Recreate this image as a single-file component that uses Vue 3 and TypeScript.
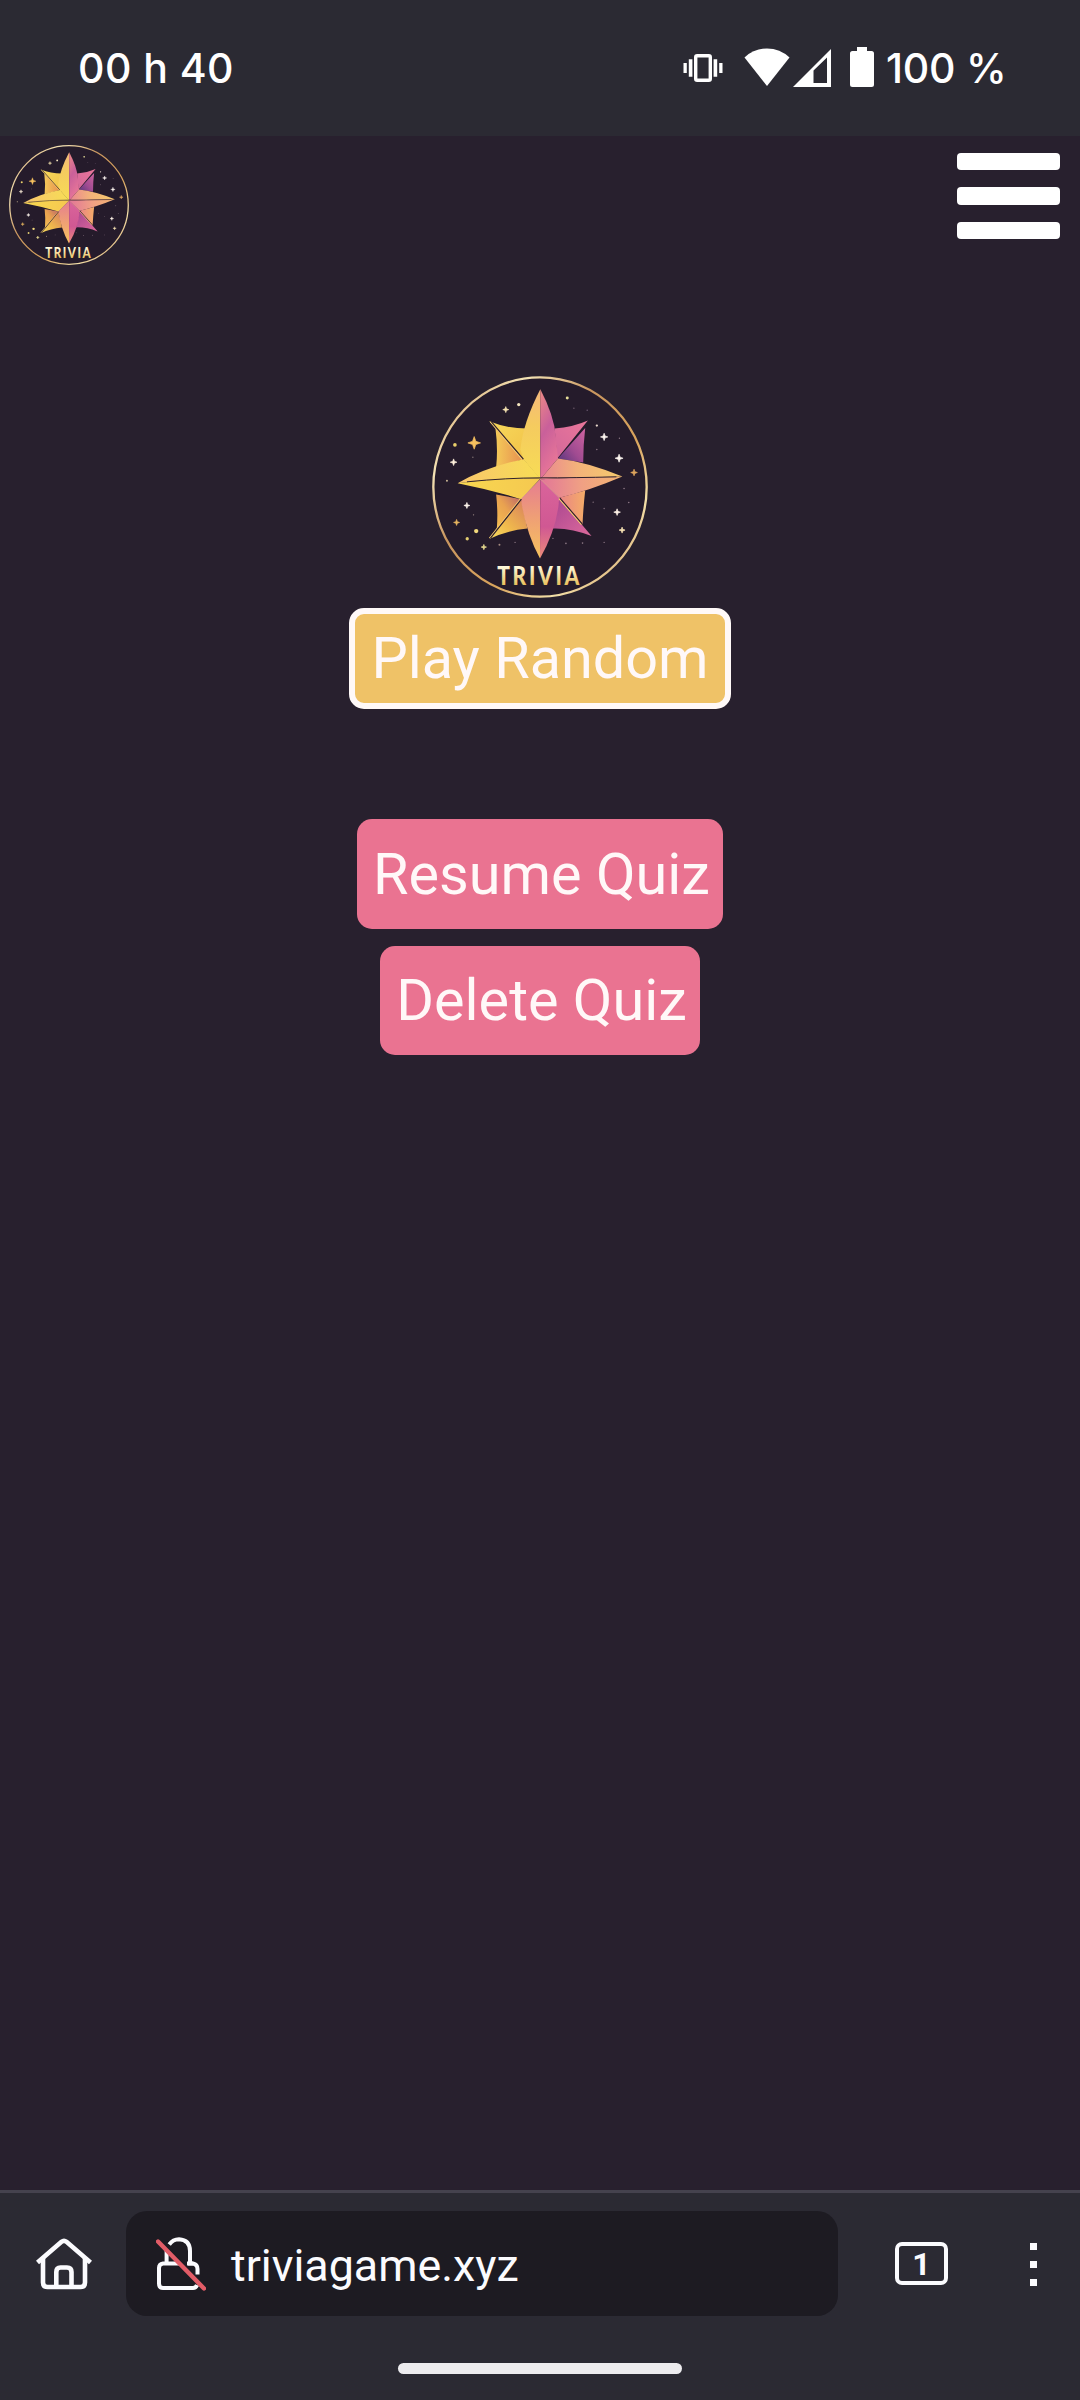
<script setup lang="ts">
interface Spark {
  x: number
  y: number
  r: number
  c: string
}

const actions: { label: string; kind: string }[] = [
  { label: 'Resume Quiz', kind: 'resume' },
  { label: 'Delete Quiz', kind: 'delete' },
]

const sparks: Spark[] = [
  { x: 162, y: 233, r: 19, c: '#f7c15f' },
  { x: 257, y: 133, r: 9, c: '#f5e3b0' },
  { x: 100, y: 291, r: 10, c: '#fff1dc' },
  { x: 140, y: 421, r: 9, c: '#fff6ee' },
  { x: 109, y: 472, r: 9, c: '#e5b45f' },
  { x: 191, y: 546, r: 8, c: '#ecdf92' },
  { x: 553, y: 215, r: 11, c: '#fff8f2' },
  { x: 598, y: 279, r: 12, c: '#fff8f2' },
  { x: 643, y: 322, r: 10, c: '#dfa65e' },
  { x: 592, y: 441, r: 10, c: '#fff3e8' },
  { x: 607, y: 495, r: 9, c: '#f7e2b4' },
]

const dots: Spark[] = [
  { x: 296, y: 118, r: 5, c: '#f5e6c0' },
  { x: 442, y: 98, r: 4.5, c: '#e8e09a' },
  { x: 104, y: 239, r: 5.5, c: '#e9cf6a' },
  { x: 168, y: 498, r: 6.5, c: '#f2d97c' },
  { x: 141, y: 521, r: 5, c: '#e3cd70' },
  { x: 80, y: 347, r: 3, c: '#cbb795' },
  { x: 158, y: 276, r: 2, c: '#8c7c7c' },
  { x: 160, y: 449, r: 2, c: '#a08d88' },
  { x: 531, y: 181, r: 3.5, c: '#e9d8cc' },
  { x: 462, y: 129, r: 2, c: '#756273' },
  { x: 502, y: 135, r: 2, c: '#75627a' },
  { x: 599, y: 219, r: 2, c: '#8c7784' },
  { x: 531, y: 253, r: 2.2, c: '#8c7784' },
  { x: 613, y: 370, r: 2.5, c: '#8c7784' },
  { x: 627, y: 412, r: 2.5, c: '#8c7784' },
  { x: 520, y: 411, r: 2, c: '#8c7784' },
  { x: 553, y: 430, r: 2, c: '#8c7784' },
  { x: 238, y: 539, r: 3, c: '#a58b80' },
  { x: 285, y: 532, r: 2, c: '#8c7784' },
  { x: 438, y: 535, r: 2.5, c: '#8c7784' },
  { x: 488, y: 534, r: 2.5, c: '#8c7784' },
  { x: 553, y: 532, r: 2, c: '#8c7784' },
  { x: 399, y: 520, r: 2, c: '#8c7784' },
]

function sparkPath(s: Spark): string {
  const k = s.r * 0.26
  return `M${s.x} ${s.y - s.r}L${s.x + k} ${s.y - k}L${s.x + s.r} ${s.y}L${s.x + k} ${s.y + k}L${s.x} ${s.y + s.r}L${s.x - k} ${s.y + k}L${s.x - s.r} ${s.y}L${s.x - k} ${s.y - k}Z`
}
</script>

<template>
  <div class="screen">
    <svg class="defs" width="0" height="0" aria-hidden="true">
      <defs>
        <linearGradient id="ring" x1="0" y1="0" x2="1" y2="1">
          <stop offset="0" stop-color="#c98f55" />
          <stop offset=".22" stop-color="#f4e3b5" />
          <stop offset=".4" stop-color="#c9965f" />
          <stop offset=".62" stop-color="#d9a45c" />
          <stop offset=".78" stop-color="#f3dfa8" />
          <stop offset="1" stop-color="#c98f55" />
        </linearGradient>
        <linearGradient id="gold" x1="0" y1="0" x2="0" y2="1">
          <stop offset="0.2" stop-color="#fffbe0" />
          <stop offset=".85" stop-color="#e9bd55" />
        </linearGradient>
        <linearGradient id="topL" x1="0" y1="0" x2="0" y2="1">
          <stop offset="0" stop-color="#f5b87c" />
          <stop offset=".4" stop-color="#f5cb5f" />
          <stop offset="1" stop-color="#f7dc55" />
        </linearGradient>
        <linearGradient id="topR" x1="0" y1="0" x2=".3" y2="1">
          <stop offset="0" stop-color="#ee8a86" />
          <stop offset=".5" stop-color="#c9609a" />
          <stop offset="1" stop-color="#e87698" />
        </linearGradient>
        <linearGradient id="leftT" x1="0" y1="0" x2="1" y2="0">
          <stop offset="0" stop-color="#f8c56c" />
          <stop offset="1" stop-color="#f7dd55" />
        </linearGradient>
        <linearGradient id="leftB" x1="0" y1="0" x2="1" y2="0">
          <stop offset="0" stop-color="#f8d850" />
          <stop offset="1" stop-color="#f5c850" />
        </linearGradient>
        <linearGradient id="rightT" x1="0" y1="0" x2="1" y2="0">
          <stop offset="0" stop-color="#e98592" />
          <stop offset=".45" stop-color="#f3b27a" />
          <stop offset="1" stop-color="#f5cb6c" />
        </linearGradient>
        <linearGradient id="rightB" x1="0" y1="0" x2="1" y2="0">
          <stop offset="0" stop-color="#e27698" />
          <stop offset=".5" stop-color="#f0a084" />
          <stop offset="1" stop-color="#f4b571" />
        </linearGradient>
        <linearGradient id="botL" x1="0" y1="0" x2="0" y2="1">
          <stop offset="0" stop-color="#e67c91" />
          <stop offset=".5" stop-color="#efa075" />
          <stop offset="1" stop-color="#f7c35d" />
        </linearGradient>
        <linearGradient id="botR" x1="0" y1="0" x2="0" y2="1">
          <stop offset="0" stop-color="#da649b" />
          <stop offset=".6" stop-color="#d05893" />
          <stop offset="1" stop-color="#ed8c79" />
        </linearGradient>
        <linearGradient id="sideL" x1="0" y1="0" x2="1" y2="0">
          <stop offset="0" stop-color="#f4ca58" />
          <stop offset="1" stop-color="#e68c50" />
        </linearGradient>
        <linearGradient id="sideLB" x1="0" y1="1" x2="1" y2="0">
          <stop offset="0" stop-color="#f6bf50" />
          <stop offset=".5" stop-color="#e9a250" />
          <stop offset="1" stop-color="#b8606c" />
        </linearGradient>
        <linearGradient id="diagTL" x1="0" y1="0" x2="1" y2="1">
          <stop offset="0" stop-color="#f7d95c" />
          <stop offset="1" stop-color="#f2c248" />
        </linearGradient>
        <linearGradient id="diagTR" x1="1" y1="0" x2="0" y2="1">
          <stop offset="0" stop-color="#ea769a" />
          <stop offset="1" stop-color="#d3689a" />
        </linearGradient>
        <linearGradient id="sideR" x1="1" y1="0" x2="0" y2="1">
          <stop offset="0" stop-color="#d064a0" />
          <stop offset=".55" stop-color="#a04b91" />
          <stop offset="1" stop-color="#56357c" />
        </linearGradient>
        <linearGradient id="sideRB" x1="0" y1="0" x2="1" y2="0">
          <stop offset="0" stop-color="#e98484" />
          <stop offset="1" stop-color="#f5ad68" />
        </linearGradient>
        <linearGradient id="diagBR" x1="0" y1="0" x2="1" y2="1">
          <stop offset="0" stop-color="#a84590" />
          <stop offset="1" stop-color="#dd6a9c" />
        </linearGradient>
        <linearGradient id="diagBL" x1="1" y1="0" x2="0" y2="1">
          <stop offset="0" stop-color="#d67c60" />
          <stop offset=".6" stop-color="#f0b94c" />
          <stop offset="1" stop-color="#f8dc60" />
        </linearGradient>
        <symbol id="emblem" viewBox="35 32 650 667" preserveAspectRatio="none">
          <ellipse cx="360" cy="365.500" rx="321" ry="329.500" fill="#251b2b" stroke="url(#ring)" stroke-width="7" />
          <path v-for="(s, i) in sparks" :key="'s' + i" :d="sparkPath(s)" :fill="s.c" :stroke="s.c" stroke-width="2" />
          <circle v-for="(d, i) in dots" :key="'d' + i" :cx="d.x" :cy="d.y" :r="d.r" :fill="d.c" />
          <path d="M226 190L312 282L228 306Q234 250 226 190Z" fill="url(#sideL)" />
          <path d="M207 168Q262 190 320 190L311 284Z" fill="url(#diagTL)" />
          <path d="M496 188L414 280L490 292Q490 240 496 188Z" fill="url(#sideR)" />
          <path d="M504 166Q460 186 404 190L412 280Z" fill="url(#diagTR)" />
          <path d="M228 388L304 402L230 492Q234 440 228 388Z" fill="url(#sideLB)" />
          <path d="M209 521Q260 496 322 490L304 402Z" fill="url(#diagBL)" />
          <path d="M496 376L418 398L488 478Q490 430 496 376Z" fill="url(#sideRB)" />
          <path d="M515 513Q455 488 398 490L418 398Z" fill="url(#diagBR)" />
          <path d="M361 72Q310 170 301 252L311 284L361 342Z" fill="url(#topL)" />
          <path d="M361 72Q402 150 408 215L414 280L361 342Z" fill="url(#topR)" />
          <path d="M112 354Q200 304 311 282L361 340Q230 340 112 354Z" fill="url(#leftT)" />
          <path d="M112 354Q230 338 361 340L303 402Q205 372 112 354Z" fill="url(#leftB)" />
          <path d="M608 334Q500 290 414 280L361 342Q480 336 608 334Z" fill="url(#rightT)" />
          <path d="M608 334Q480 336 361 342L418 398Q510 376 608 334Z" fill="url(#rightB)" />
          <path d="M361 342L303 402Q316 500 360 580Z" fill="url(#botL)" />
          <path d="M361 342L418 398Q412 490 360 580Z" fill="url(#botR)" />
          <path d="M361 342L303 402M361 342L418 398" stroke="#f6ae9f" stroke-width="2" fill="none" />
          <path d="M140 350Q260 338 361 338T590 335" stroke="#30202c" stroke-width="3" fill="none" />
          <path d="M211 170L307 283M301 402L208 519M417 400L485 478" stroke="#f9cf73" stroke-width="4" fill="none" />
          <path d="M214 170L310 282M304 402L211 519M420 399L487 476" stroke="#30202c" stroke-width="3.500" fill="none" />
        </symbol>
      </defs>
    </svg>

    <header class="status">
      <span class="clock">00 h 40</span>
      <div class="indicators">
        <svg class="vibrate" width="40" height="28" viewBox="0 0 40 28">
          <rect x="12.700" y="1.700" width="14.600" height="24.600" rx="1.500" fill="none" stroke="#fff" stroke-width="3.400" />
          <path d="M.5 9h3.300v10H.5zM5.800 5.300h3.600v17.400H5.800zM30.600 5.300h3.600v17.400h-3.600zM36.200 9h3.300v10h-3.300z" fill="#fff" />
        </svg>
        <svg class="wifi" width="46" height="38" viewBox="0 0 46 38">
          <path d="M23 38L.5 9.500Q10 .5 23 .5T45.500 9.500Z" fill="#fff" />
        </svg>
        <svg class="signal" width="38" height="38" viewBox="0 0 38 38">
          <path fill-rule="evenodd" d="M38 0V38H0ZM20.500 21.500V34H34V8.500Z" fill="#fff" />
        </svg>
        <svg class="battery" width="24" height="40" viewBox="0 0 24 40">
          <path d="M7 0H17V4H21.500Q24 4 24 6.500V37.500Q24 40 21.500 40H2.500Q0 40 0 37.500V6.500Q0 4 2.500 4H7Z" fill="#fff" />
        </svg>
        <span class="percent">100 %</span>
      </div>
    </header>

    <main class="page">
      <nav class="nav">
        <svg class="brand" viewBox="35 32 650 667" preserveAspectRatio="none">
          <use href="#emblem" x="35" y="32" width="650" height="667" />
          <text class="word" transform="translate(231 660) scale(.8 1)" textLength="309" fill="url(#gold)">TRIVIA</text>
        </svg>
        <div class="burger"><i></i><i></i><i></i></div>
      </nav>

      <section class="home">
        <svg class="hero" viewBox="35 32 650 667" preserveAspectRatio="none">
          <use href="#emblem" x="35" y="32" width="650" height="667" />
          <text class="word" transform="translate(231 660) scale(.8 1)" textLength="309" fill="url(#gold)">TRIVIA</text>
        </svg>
        <button class="btn play">Play Random</button>
        <div class="saved">
          <button v-for="a in actions" :key="a.kind" class="btn pink" :class="a.kind">{{ a.label }}</button>
        </div>
      </section>
    </main>

    <footer class="browser">
      <div class="toolbar">
        <svg class="house" width="56" height="52" viewBox="0 0 56 52" fill="none" stroke="#fbfbfe" stroke-width="4.600">
          <path d="M1.500 24.500L25.500 3.800Q28 1.800 30.500 3.800L54.500 24.500" />
          <path d="M7 20V44.500Q7 49 11.500 49H44.500Q49 49 49 44.500V20" />
          <path d="M20.300 49V34Q20.300 29.500 24.500 29.500H31Q35.500 29.500 35.500 34V49" />
        </svg>
        <div class="address">
          <svg width="50" height="54" viewBox="0 0 50 54" fill="none" stroke="#fbfbfe" stroke-width="4">
            <path d="M13.200 7.500Q17 2.300 23 2.300Q34 3 34 14V26.500H37Q41.500 27.500 41.500 32V37.500" />
            <path d="M10.600 13V26.500M23 26.500H7Q3 27 3 31V46.500Q3 51 7 51H37Q40 51 41 48" />
            <path d="M31 26.500H37" />
            <path d="M2 4.500L48 51.500" stroke="#e25c67" stroke-width="4.400" stroke-linecap="round" />
          </svg>
          <span>triviagame.xyz</span>
        </div>
        <div class="tabs">1</div>
        <div class="more"><i></i><i></i><i></i></div>
      </div>
      <div class="handle"></div>
    </footer>
  </div>
</template>

<style>
body {
  background: #28202e;
}
</style>

<style scoped>
.screen {
  width: 1080px;
  height: 2400px;
  display: flex;
  flex-direction: column;
  background: #28202e;
  font-family: Roboto, 'Liberation Sans', sans-serif;
  overflow: hidden;
}
.defs {
  position: absolute;
}
svg {
  display: block;
  flex: none;
}
.status {
  height: 136px;
  box-sizing: border-box;
  flex: none;
  background: #2b2a33;
  color: #fff;
  display: flex;
  justify-content: space-between;
  padding: 0 75px 0 78px;
  font: 500 41px/136px Inter, sans-serif;
}
.clock {
  letter-spacing: 0.450px;
}
.indicators {
  display: flex;
  align-items: center;
}
.wifi {
  margin: -2px 0 0 21px;
}
.signal {
  margin-left: 3px;
}
.battery {
  margin: -2px 0 0 19px;
}
.percent {
  width: 119px;
  margin-left: 12px;
  white-space: nowrap;
  letter-spacing: -0.200px;
}
.page {
  flex: 1;
}
.nav {
  display: flex;
  justify-content: space-between;
  align-items: flex-start;
  padding: 9px 20px 0 9px;
}
.brand {
  width: 120px;
  height: 120px;
}
.word {
  font: 900 79px Lato, sans-serif;
}
.burger {
  display: flex;
  flex-direction: column;
  gap: 17px;
  margin-top: 8px;
}
.burger i {
  width: 103.500px;
  height: 17.300px;
  border-radius: 4px;
  background: #fff;
}
.home {
  display: flex;
  flex-direction: column;
  align-items: center;
  padding-top: 111px;
}
.hero {
  width: 216px;
  height: 222px;
}
.btn {
  display: block;
  box-sizing: border-box;
  border: 0;
  border-radius: 15px;
  padding: 0;
  color: #fff8f8;
  font: 400 57.600px/66px Roboto, sans-serif;
  text-align: center;
  white-space: nowrap;
}
.play {
  width: 382px;
  height: 101px;
  margin-top: 10px;
  background: #efc267;
  border: 6px solid #fff9f8;
}
.saved {
  display: flex;
  flex-direction: column;
  align-items: center;
  gap: 17px;
  margin-top: 110px;
}
.pink {
  height: 110px;
  padding-left: 3px;
  background: #ea7391;
}
.resume {
  width: 366px;
  padding-top: 1px;
}
.delete {
  width: 320px;
  height: 109px;
}
.browser {
  height: 210px;
  box-sizing: border-box;
  flex: none;
  border-top: 3px solid #45424e;
  background: #2b2a33;
}
.toolbar {
  display: flex;
  align-items: flex-start;
  padding: 18px 43px 0 35.500px;
}
.house {
  margin-top: 27px;
}
.address {
  width: 712px;
  height: 105px;
  box-sizing: border-box;
  margin-left: 34.500px;
  border-radius: 21px;
  background: #1d1b22;
  display: flex;
  align-items: center;
  padding-left: 30px;
  color: #fbfbfe;
  font-size: 44.800px;
}
.address span {
  margin-left: 25px;
  padding-top: 3px;
}
.tabs {
  width: 53px;
  height: 43px;
  box-sizing: border-box;
  margin: 31px 0 0 57px;
  border: 4.500px solid #fbfbfe;
  border-radius: 7px;
  color: #fbfbfe;
  font: 700 32px/36px Roboto, sans-serif;
  text-align: center;
}
.more {
  display: flex;
  flex-direction: column;
  gap: 11px;
  margin: 32px 0 0 auto;
}
.more i {
  width: 7px;
  height: 7px;
  background: #fbfbfe;
}
.handle {
  width: 284px;
  height: 11px;
  margin: 47px auto 0;
  border-radius: 6px;
  background: #edecef;
}
</style>
